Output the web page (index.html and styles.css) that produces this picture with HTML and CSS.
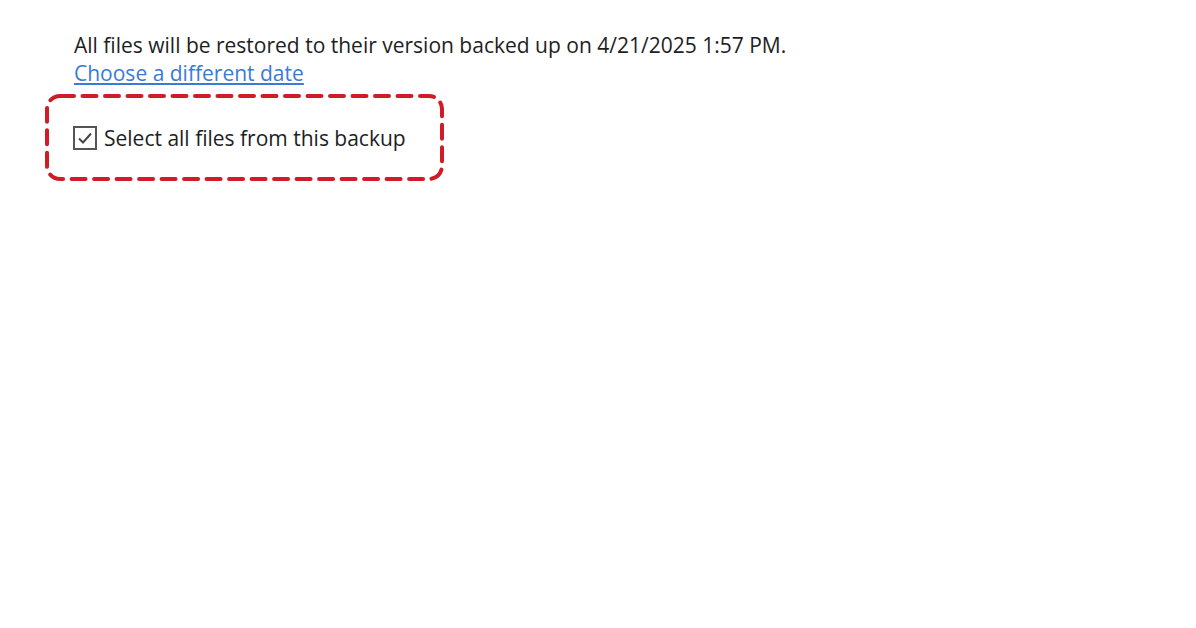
FILE: index.html
```html
<!DOCTYPE html>
<html>
<head>
<meta charset="utf-8">
<link rel="stylesheet" href="styles.css">
</head>
<body>
<div class="page">
  <div class="info">
    <p class="desc">All files will be restored to their version backed up on 4/21/2025 1:57 PM.</p>
    <a class="link" href="#">Choose a different date</a>
  </div>
  <div class="highlight">
    <svg class="dash" width="399" height="87" viewBox="0 0 399 87"><rect x="2" y="2" width="395" height="83" rx="13" ry="13" fill="none" stroke="#d11c28" stroke-width="4" stroke-dasharray="14 8.5" stroke-linecap="round"/></svg>
    <label class="check">
      <span class="box">
        <svg width="16" height="14" viewBox="0 0 16 14"><path d="M2 7.5 L6 11.5 L14 2.5" fill="none" stroke="#444" stroke-width="1.9"/></svg>
      </span>
      <span class="label">Select all files from this backup</span>
    </label>
  </div>
</div>
</body>
</html>
```

FILE: styles.css
```css
html, body {
  margin: 0;
  background: #ffffff;
}
.page {
  width: 1196px;
  height: 628px;
  padding: 31px 0 0 45px;
  box-sizing: border-box;
  font-family: "Open Sans", "Noto Sans", sans-serif;
  font-size: 21px;
  color: #1e1e1e;
}
.info {
  padding-left: 29px;
  line-height: 28px;
}
.desc {
  margin: 0;
}
.link {
  color: #3a7bd5;
  text-decoration: underline;
}
.highlight {
  position: relative;
  margin-top: 7px;
  width: 399px;
  height: 87px;
  box-sizing: border-box;
  display: flex;
  align-items: center;
  padding-left: 28px;
}
.dash {
  position: absolute;
  left: 0;
  top: 0;
}
.check {
  display: flex;
  align-items: center;
  gap: 7px;
}
.box {
  width: 24px;
  height: 24px;
  box-sizing: border-box;
  border: 2px solid #555;
  display: flex;
  align-items: center;
  justify-content: center;
}
.label {
  color: #1e1e1e;
}
```
